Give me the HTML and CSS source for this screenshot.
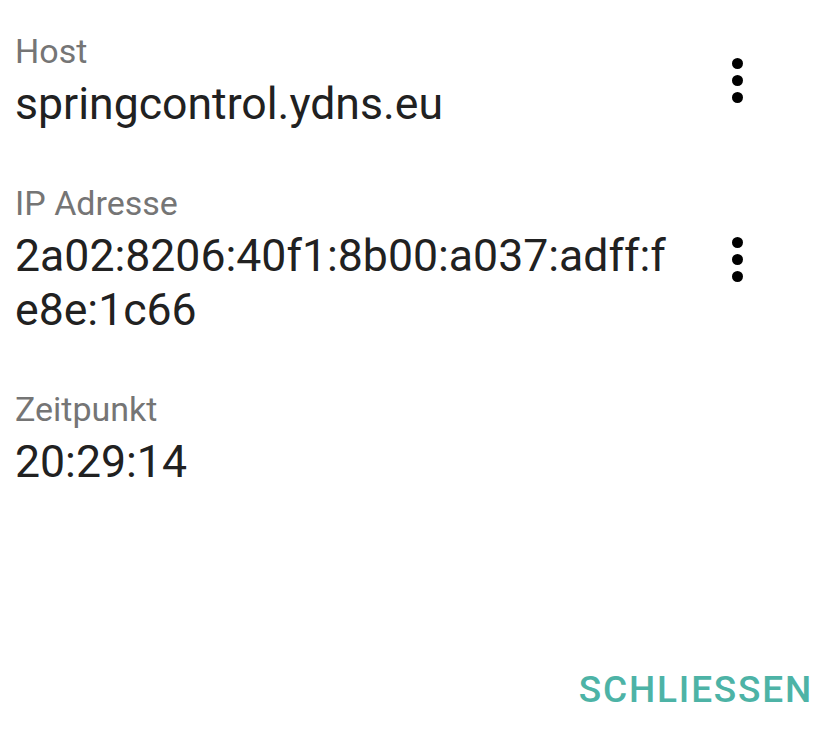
FILE: index.html
```html
<!DOCTYPE html>
<html lang="de">
<head>
  <meta charset="UTF-8" />
  <meta name="viewport" content="width=device-width, initial-scale=1" />
  <title>Details</title>
  <link rel="stylesheet" href="styles.css">
</head>
<body>

  <div class="dialog">
    <div class="entries">

      <div class="entry">
        <div class="entry-text">
          <div class="label">Host</div>
          <div class="value">springcontrol.ydns.eu</div>
        </div>
        <button class="more" aria-label="Mehr Optionen">
          <span class="dot"></span><span class="dot"></span><span class="dot"></span>
        </button>
      </div>

      <div class="entry">
        <div class="entry-text">
          <div class="label">IP Adresse</div>
          <div class="value">2a02:8206:40f1:8b00:a037:adff:fe8e:1c66</div>
        </div>
        <button class="more" aria-label="Mehr Optionen">
          <span class="dot"></span><span class="dot"></span><span class="dot"></span>
        </button>
      </div>

      <div class="entry">
        <div class="entry-text">
          <div class="label">Zeitpunkt</div>
          <div class="value">20:29:14</div>
        </div>
      </div>

    </div>

    <div class="actions">
      <button class="text-button">Schliessen</button>
    </div>
  </div>

</body>
</html>
```

FILE: styles.css
```css
body {
  margin: 0;
  background-color: #ffffff;
  font-family: Roboto, 'Noto Sans', sans-serif;
  color: #212121;
}

.dialog {
  padding: 29px 0 0 15px;
}

.entries {
  display: flex;
  flex-direction: column;
  gap: 50px;
}

.entry {
  display: flex;
  align-items: center;
  gap: 24px;
}

.entry-text {
  flex: 1;
  min-width: 0;
}

.label {
  font-size: 34px;
  line-height: 44px;
  color: #757575;
  margin-bottom: 4px;
}

.value {
  font-size: 44.6px;
  line-height: 54px;
  color: #212121;
  word-break: break-all;
}

.more {
  width: 72px;
  margin-right: 40px;
  padding: 0;
  border: none;
  background: none;
  display: flex;
  flex-direction: column;
  align-items: center;
  gap: 6px;
  cursor: pointer;
}

.dot {
  width: 11px;
  height: 11px;
  border-radius: 50%;
  background-color: #000000;
}

.actions {
  display: flex;
  justify-content: flex-end;
  margin-top: 181px;
}

.text-button {
  border: none;
  background: none;
  padding: 0;
  font-family: Roboto, 'Noto Sans', sans-serif;
  font-size: 37px;
  line-height: 40px;
  font-weight: 500;
  letter-spacing: 1.8px;
  text-transform: uppercase;
  color: #4db3a6;
  cursor: pointer;
}
```
